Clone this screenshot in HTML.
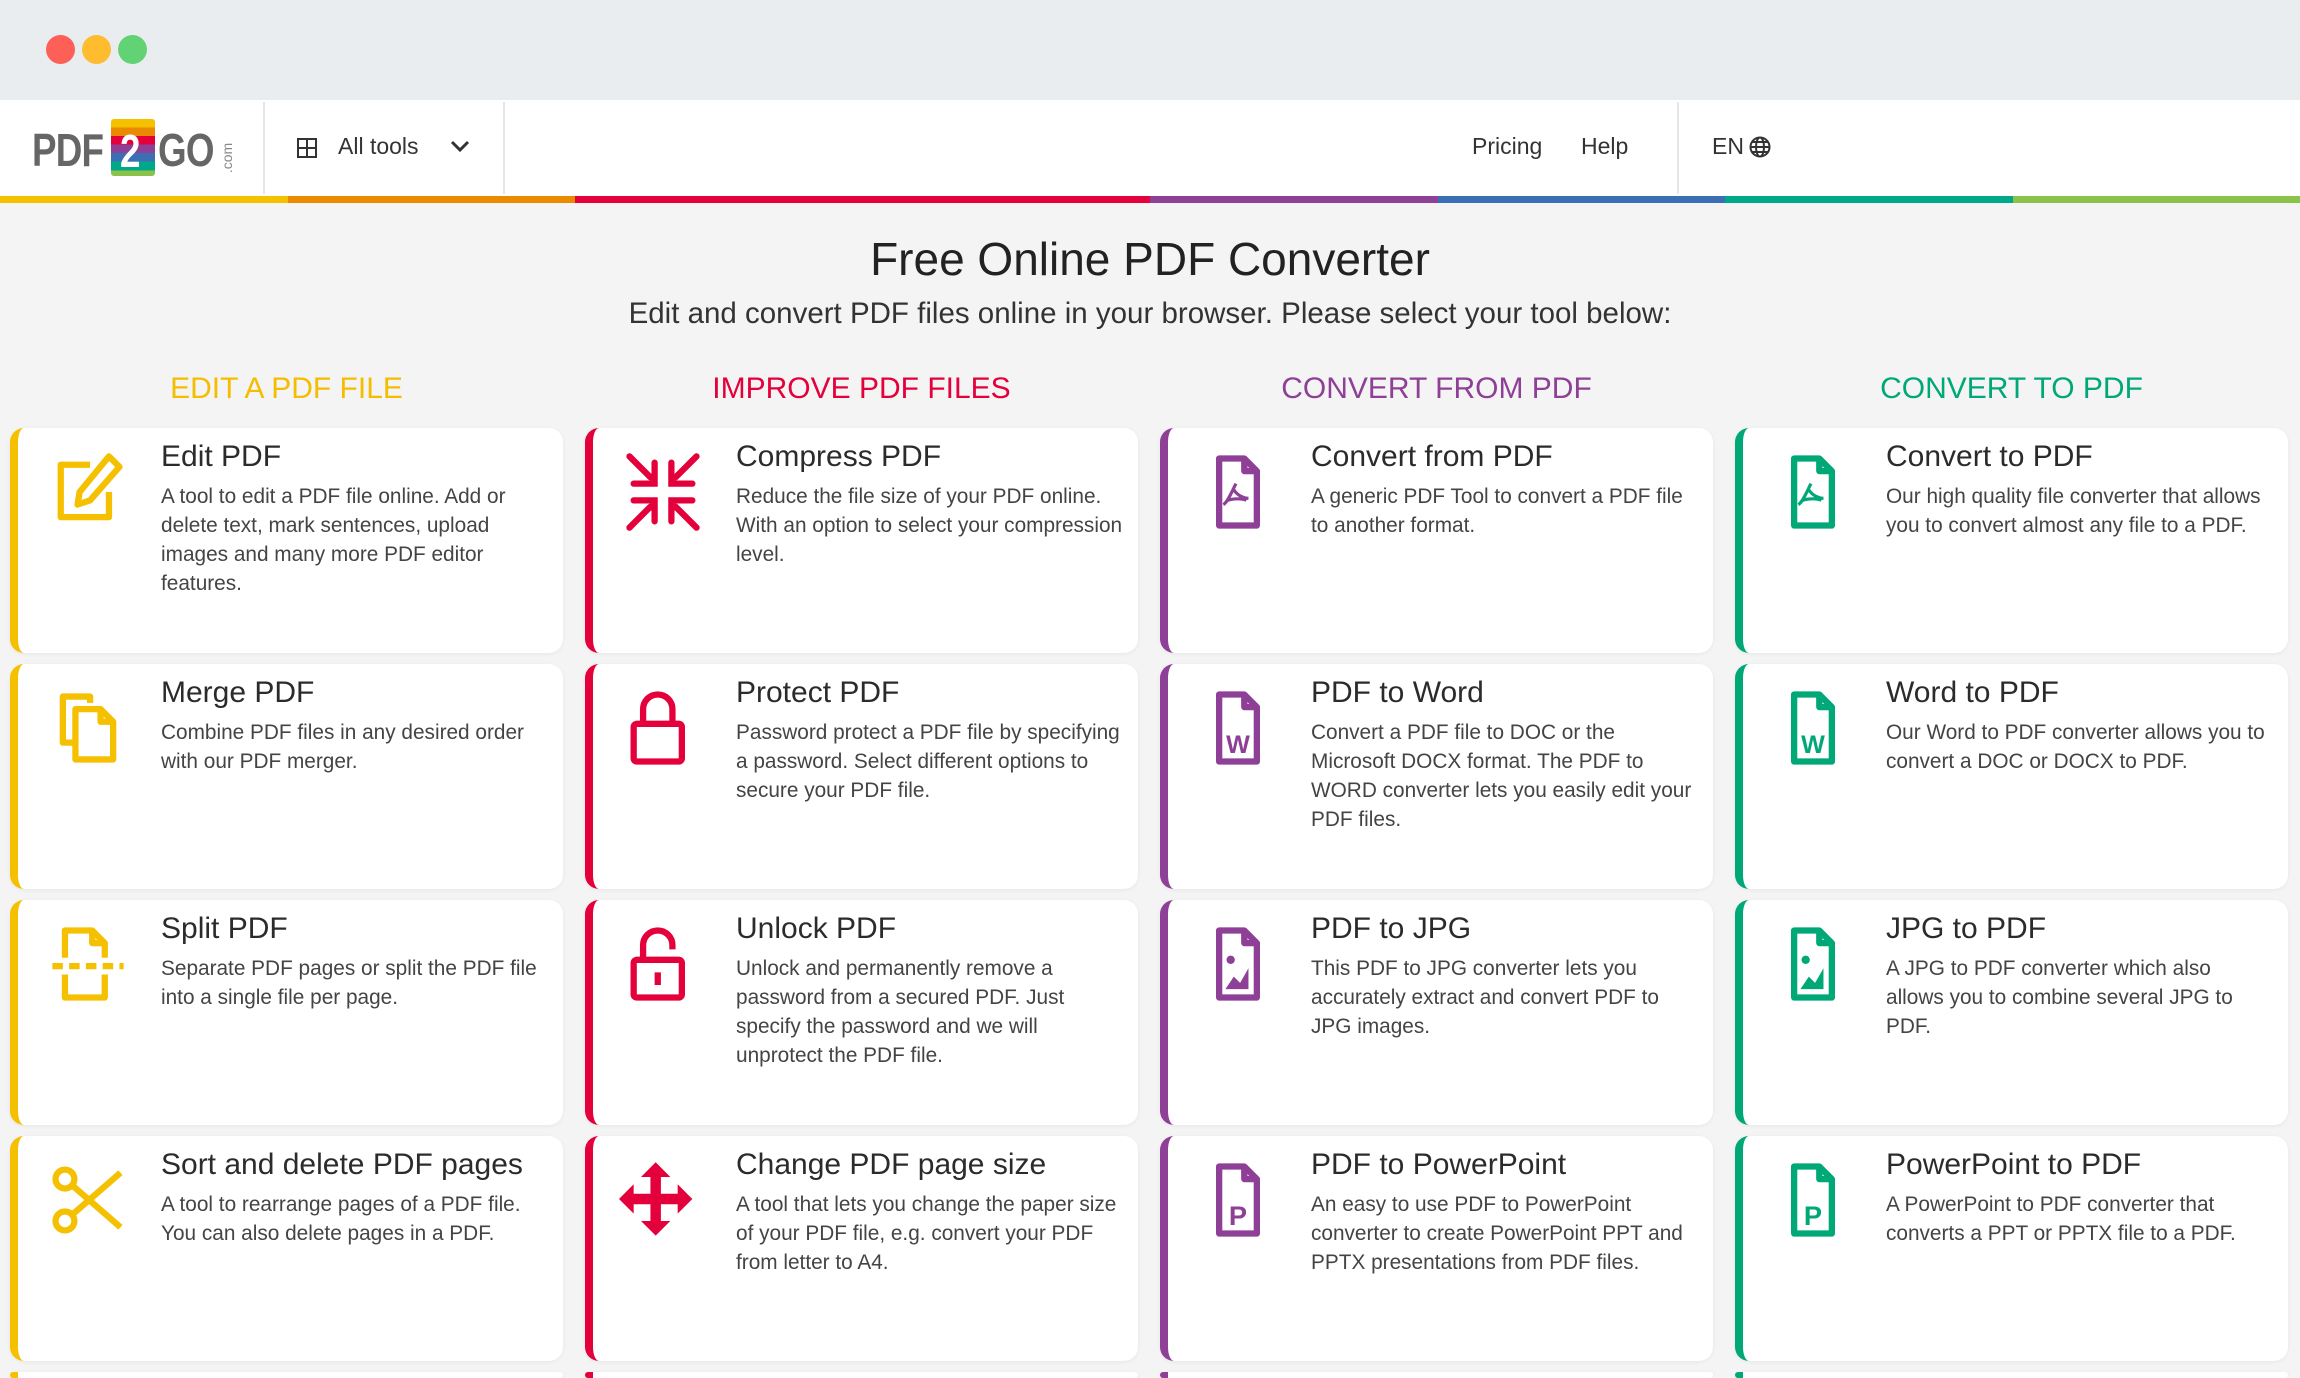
<!DOCTYPE html>
<html style="width:2300px;height:1378px;overflow:hidden"><head><meta charset="utf-8"><style>
*{box-sizing:border-box;margin:0;padding:0}
body{width:2300px;height:1378px;overflow:hidden;background:#f4f4f4;font-family:"Liberation Sans",sans-serif;color:#333;position:relative}
.top{position:absolute;left:0;top:0;width:2300px;height:100px;background:#e9edf0}
.dot{position:absolute;top:35px;width:29px;height:29px;border-radius:50%}
.hdr{position:absolute;left:0;top:100px;width:2300px;height:96px;background:#fff}
.sep{position:absolute;top:2px;width:2px;height:92px;background:#e6e6e6}
.stripe{position:absolute;top:196px;height:7px;width:288px}
.nav{position:absolute;top:133px;font-size:23px;color:#333}
h1{position:absolute;top:232px;width:2300px;left:0;text-align:center;font-size:46px;font-weight:normal;color:#222}
.sub{position:absolute;top:297px;width:2300px;left:0;text-align:center;font-size:29.5px;color:#333}
.ch{position:absolute;top:372px;width:553px;text-align:center;font-size:30px}
.card{position:absolute;width:553px;height:225px;background:#fff;border-radius:14px;border-left:8px solid;box-shadow:0 1px 4px rgba(0,0,0,.06)}
.card svg{position:absolute;left:26px;top:20px;width:88px;height:88px}
.card h3{position:absolute;left:143px;top:12px;font-size:30px;font-weight:normal;color:#2b2b2b}
.card p{position:absolute;left:143px;top:54px;right:14px;font-size:20.8px;line-height:29px;color:#444}
.logo{position:absolute;font-weight:bold;color:#666;font-size:46px;transform-origin:0 0;transform:scaleX(.8);letter-spacing:-1px}
</style></head><body>
<div class="top"></div>
<div class="dot" style="left:46px;background:#fe5f57"></div>
<div class="dot" style="left:82px;background:#febc2e"></div>
<div class="dot" style="left:118px;background:#28c840;opacity:.7"></div>
<div class="hdr">
 <div class="logo" style="left:32px;top:23px">PDF</div>
 <div style="position:absolute;left:111px;top:19px;width:44px;height:57px;border-radius:3px;background:linear-gradient(#f5c000 0 15%,#e98a00 15% 30%,#e4003a 30% 45%,#8e3f96 45% 60%,#3c6eb4 60% 75%,#00a88a 75% 90%,#8bc34a 90%)"></div>
 <div class="logo" style="left:120px;top:24px;color:#fff">2</div>
 <div class="logo" style="left:158px;top:23px">GO</div>
 <div style="position:absolute;left:212px;top:50px;font-size:14px;color:#888;transform:rotate(-90deg)">.com</div>
 <div class="sep" style="left:263px"></div>
 <svg style="position:absolute;left:297px;top:38px" width="20" height="20" viewBox="0 0 20 20" fill="none" stroke="#333" stroke-width="2"><rect x="1" y="1" width="18" height="18"/><path d="M10 1v18M1 10h18"/></svg>
 <div class="nav" style="left:338px;top:33px">All tools</div>
 <svg style="position:absolute;left:450px;top:40px" width="20" height="14" viewBox="0 0 20 14" fill="none" stroke="#333" stroke-width="3"><path d="M2 2l8 8 8-8"/></svg>
 <div class="sep" style="left:503px"></div>
 <div class="nav" style="left:1472px;top:33px">Pricing</div>
 <div class="nav" style="left:1581px;top:33px">Help</div>
 <div class="sep" style="left:1677px"></div>
 <div class="nav" style="left:1712px;top:33px">EN</div>
 <svg style="position:absolute;left:1749px;top:36px" width="22" height="22" viewBox="0 0 22 22" fill="none" stroke="#333" stroke-width="2"><circle cx="11" cy="11" r="9.5"/><ellipse cx="11" cy="11" rx="4" ry="9.5"/><path d="M1.5 11h19M3 6h16M3 16h16"/></svg>
</div>
<div class="stripe" style="left:0;background:#f5c000"></div>
<div class="stripe" style="left:288px;background:#e98a00"></div>
<div class="stripe" style="left:575px;background:#e4003a"></div>
<div class="stripe" style="left:863px;background:#e4003a"></div>
<div class="stripe" style="left:1150px;background:#8e3f96"></div>
<div class="stripe" style="left:1438px;background:#3c6eb4"></div>
<div class="stripe" style="left:1725px;background:#00a88a"></div>
<div class="stripe" style="left:2013px;background:#8bc34a"></div>
<h1>Free Online PDF Converter</h1>
<div class="sub">Edit and convert PDF files online in your browser. Please select your tool below:</div>
<div class="ch" style="left:10px;color:#f5bd00">EDIT A PDF FILE</div>
<div class="ch" style="left:585px;color:#e4003a">IMPROVE PDF FILES</div>
<div class="ch" style="left:1160px;color:#8e3f96">CONVERT FROM PDF</div>
<div class="ch" style="left:1735px;color:#00a878">CONVERT TO PDF</div>

<div class="card" style="left:10px;top:428px;border-color:#f5c000"><svg viewBox="0 0 84 84" fill="none" stroke="#f5c000" stroke-width="6" stroke-linejoin="round"><path d="M44 16H16v50h46V42"/><path d="M62 8l10 10-28 32-12 4 2-12z"/></svg><h3>Edit PDF</h3><p>A tool to edit a PDF file online. Add or delete text, mark sentences, upload images and many more PDF editor features.</p></div>
<div class="card" style="left:10px;top:664px;border-color:#f5c000"><svg viewBox="0 0 84 84" fill="none" stroke="#f5c000" stroke-width="6" stroke-linejoin="round"><path d="M44 18V12H18v44h12"/><path d="M30 24h24l12 12v36H30z"/><path d="M54 24v12h12"/></svg><h3>Merge PDF</h3><p>Combine PDF files in any desired order with our PDF merger.</p></div>
<div class="card" style="left:10px;top:900px;border-color:#f5c000"><svg viewBox="0 0 84 84" fill="none" stroke="#f5c000" stroke-width="6" stroke-linejoin="round"><path d="M20 36V10h26l12 12v14M20 52v22h38V52"/><path d="M46 10v12h12"/><path d="M8 44h68" stroke-dasharray="10 6"/></svg><h3>Split PDF</h3><p>Separate PDF pages or split the PDF file into a single file per page.</p></div>
<div class="card" style="left:10px;top:1136px;border-color:#f5c000"><svg viewBox="0 0 84 84" fill="none" stroke="#f5c000" stroke-width="6"><circle cx="20" cy="22" r="9"/><circle cx="20" cy="62" r="9"/><path d="M27 28l46 40M27 56l46-40"/></svg><h3>Sort and delete PDF pages</h3><p>A tool to rearrange pages of a PDF file. You can also delete pages in a PDF.</p></div>
<div class="card" style="left:10px;top:1372px;height:6px;border-color:#f5c000"></div>

<div class="card" style="left:585px;top:428px;border-color:#e4003a"><svg viewBox="0 0 84 84" fill="none" stroke="#e4003a" stroke-width="6" stroke-linecap="round"><path d="M10 8l20 20M34 14v20H14M74 8L54 28M50 14v20h20M10 76l20-20M34 70V50H14M74 76L54 56M50 70V50h20"/></svg><h3>Compress PDF</h3><p>Reduce the file size of your PDF online. With an option to select your compression level.</p></div>
<div class="card" style="left:585px;top:664px;border-color:#e4003a"><svg viewBox="0 0 84 84" fill="none" stroke="#e4003a" stroke-width="6" stroke-linejoin="round"><rect x="14" y="38" width="46" height="36" rx="3"/><path d="M23 38V24a14 14 0 0 1 28 0v14"/></svg><h3>Protect PDF</h3><p>Password protect a PDF file by specifying a password. Select different options to secure your PDF file.</p></div>
<div class="card" style="left:585px;top:900px;border-color:#e4003a"><svg viewBox="0 0 84 84" fill="none" stroke="#e4003a" stroke-width="6" stroke-linejoin="round"><rect x="14" y="38" width="46" height="36" rx="3"/><path d="M23 38V24a14 14 0 0 1 28 0v4M37 50v12"/></svg><h3>Unlock PDF</h3><p>Unlock and permanently remove a password from a secured PDF. Just specify the password and we will unprotect the PDF file.</p></div>
<div class="card" style="left:585px;top:1136px;border-color:#e4003a"><svg viewBox="0 0 84 84" fill="#e4003a"><path d="M35 6l14 14H40v16h16v-9l14 14-14 14v-9H40v16h9L35 76 21 62h9V46H14v9L0 41l14-14v9h16V20h-9z"/></svg><h3>Change PDF page size</h3><p>A tool that lets you change the paper size of your PDF file, e.g. convert your PDF from letter to A4.</p></div>
<div class="card" style="left:585px;top:1372px;height:6px;border-color:#e4003a"></div>

<div class="card" style="left:1160px;top:428px;border-color:#8e3f96"><svg viewBox="0 0 84 84" fill="none" stroke="#8e3f96" stroke-width="6" stroke-linejoin="round"><path d="M24 10h24l12 12v52H24z"/><path d="M48 10v12h12"/><path d="M40 34c-4 8-8 18-12 20M38 40c4 6 10 8 14 8M32 50c6-2 14-2 18 0" stroke-width="3"/></svg><h3>Convert from PDF</h3><p>A generic PDF Tool to convert a PDF file to another format.</p></div>
<div class="card" style="left:1160px;top:664px;border-color:#8e3f96"><svg viewBox="0 0 84 84" fill="none" stroke="#8e3f96" stroke-width="6" stroke-linejoin="round"><path d="M24 10h24l12 12v52H24z"/><path d="M48 10v12h12"/><text x="42" y="66" font-size="24" font-weight="bold" text-anchor="middle" fill="#8e3f96" stroke="none" font-family="Liberation Sans">W</text></svg><h3>PDF to Word</h3><p>Convert a PDF file to DOC or the Microsoft DOCX format. The PDF to WORD converter lets you easily edit your PDF files.</p></div>
<div class="card" style="left:1160px;top:900px;border-color:#8e3f96"><svg viewBox="0 0 84 84" fill="none" stroke="#8e3f96" stroke-width="6" stroke-linejoin="round"><path d="M24 10h24l12 12v52H24z"/><path d="M48 10v12h12"/><circle cx="35" cy="38" r="4" fill="#8e3f96" stroke="none"/><path d="M30 66l8-12 6 6 8-14v20z" fill="#8e3f96" stroke="none"/></svg><h3>PDF to JPG</h3><p>This PDF to JPG converter lets you accurately extract and convert PDF to JPG images.</p></div>
<div class="card" style="left:1160px;top:1136px;border-color:#8e3f96"><svg viewBox="0 0 84 84" fill="none" stroke="#8e3f96" stroke-width="6" stroke-linejoin="round"><path d="M24 10h24l12 12v52H24z"/><path d="M48 10v12h12"/><text x="42" y="66" font-size="26" font-weight="bold" text-anchor="middle" fill="#8e3f96" stroke="none" font-family="Liberation Sans">P</text></svg><h3>PDF to PowerPoint</h3><p>An easy to use PDF to PowerPoint converter to create PowerPoint PPT and PPTX presentations from PDF files.</p></div>
<div class="card" style="left:1160px;top:1372px;height:6px;border-color:#8e3f96"></div>

<div class="card" style="left:1735px;top:428px;border-color:#00a878"><svg viewBox="0 0 84 84" fill="none" stroke="#00a878" stroke-width="6" stroke-linejoin="round"><path d="M24 10h24l12 12v52H24z"/><path d="M48 10v12h12"/><path d="M40 34c-4 8-8 18-12 20M38 40c4 6 10 8 14 8M32 50c6-2 14-2 18 0" stroke-width="3"/></svg><h3>Convert to PDF</h3><p>Our high quality file converter that allows you to convert almost any file to a PDF.</p></div>
<div class="card" style="left:1735px;top:664px;border-color:#00a878"><svg viewBox="0 0 84 84" fill="none" stroke="#00a878" stroke-width="6" stroke-linejoin="round"><path d="M24 10h24l12 12v52H24z"/><path d="M48 10v12h12"/><text x="42" y="66" font-size="24" font-weight="bold" text-anchor="middle" fill="#00a878" stroke="none" font-family="Liberation Sans">W</text></svg><h3>Word to PDF</h3><p>Our Word to PDF converter allows you to convert a DOC or DOCX to PDF.</p></div>
<div class="card" style="left:1735px;top:900px;border-color:#00a878"><svg viewBox="0 0 84 84" fill="none" stroke="#00a878" stroke-width="6" stroke-linejoin="round"><path d="M24 10h24l12 12v52H24z"/><path d="M48 10v12h12"/><circle cx="35" cy="38" r="4" fill="#00a878" stroke="none"/><path d="M30 66l8-12 6 6 8-14v20z" fill="#00a878" stroke="none"/></svg><h3>JPG to PDF</h3><p>A JPG to PDF converter which also allows you to combine several JPG to PDF.</p></div>
<div class="card" style="left:1735px;top:1136px;border-color:#00a878"><svg viewBox="0 0 84 84" fill="none" stroke="#00a878" stroke-width="6" stroke-linejoin="round"><path d="M24 10h24l12 12v52H24z"/><path d="M48 10v12h12"/><text x="42" y="66" font-size="26" font-weight="bold" text-anchor="middle" fill="#00a878" stroke="none" font-family="Liberation Sans">P</text></svg><h3>PowerPoint to PDF</h3><p>A PowerPoint to PDF converter that converts a PPT or PPTX file to a PDF.</p></div>
<div class="card" style="left:1735px;top:1372px;height:6px;border-color:#00a878"></div>
</body></html>
